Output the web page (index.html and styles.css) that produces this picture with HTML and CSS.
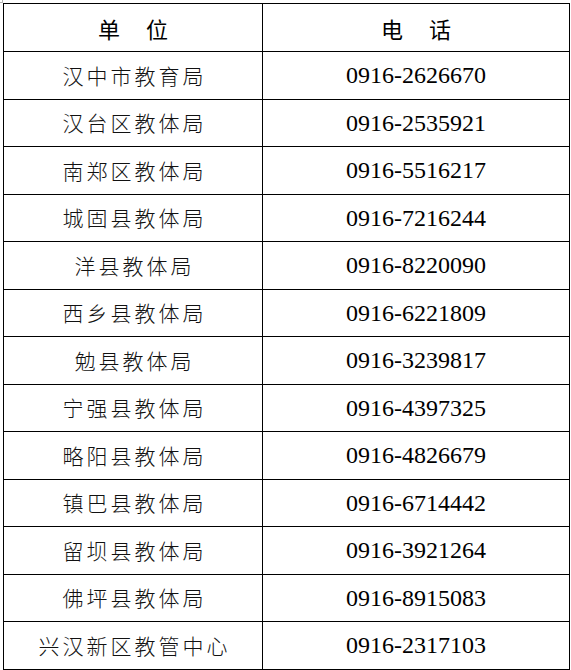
FILE: index.html
```html
<!DOCTYPE html>
<html lang="zh-CN">
<head>
<meta charset="utf-8">
<title>联系电话</title>
<link rel="stylesheet" href="styles.css">
</head>
<body>
<div class="page">
  <span class="corner"></span>
  <table class="contacts">
    <thead>
      <tr class="head-row">
        <th class="col-unit">单　位</th>
        <th class="col-phone">电　话</th>
      </tr>
    </thead>
    <tbody>
      <tr><td class="unit">汉中市教育局</td><td class="phone">0916-2626670</td></tr>
      <tr><td class="unit">汉台区教体局</td><td class="phone">0916-2535921</td></tr>
      <tr><td class="unit">南郑区教体局</td><td class="phone">0916-5516217</td></tr>
      <tr><td class="unit">城固县教体局</td><td class="phone">0916-7216244</td></tr>
      <tr><td class="unit">洋县教体局</td><td class="phone">0916-8220090</td></tr>
      <tr><td class="unit">西乡县教体局</td><td class="phone">0916-6221809</td></tr>
      <tr><td class="unit">勉县教体局</td><td class="phone">0916-3239817</td></tr>
      <tr><td class="unit">宁强县教体局</td><td class="phone">0916-4397325</td></tr>
      <tr><td class="unit">略阳县教体局</td><td class="phone">0916-4826679</td></tr>
      <tr><td class="unit">镇巴县教体局</td><td class="phone">0916-6714442</td></tr>
      <tr><td class="unit">留坝县教体局</td><td class="phone">0916-3921264</td></tr>
      <tr><td class="unit">佛坪县教体局</td><td class="phone">0916-8915083</td></tr>
      <tr><td class="unit">兴汉新区教管中心</td><td class="phone">0916-2317103</td></tr>
    </tbody>
  </table>
</div>
</body>
</html>
```
FILE: styles.css
```css
html, body {
  margin: 0;
  padding: 0;
  background: #ffffff;
}

.page {
  position: relative;
  padding: 3px 0 0 3px;
  width: 571px;
  box-sizing: border-box;
}

.corner {
  position: absolute;
  left: 0;
  top: 0;
  width: 2px;
  height: 2px;
  border-right: 1px solid #b5b5b5;
  border-bottom: 1px solid #b5b5b5;
}

.contacts {
  border-collapse: collapse;
  width: 567px;
  table-layout: fixed;
  color: #000;
}

.contacts th,
.contacts td {
  border: 1px solid #000;
  padding: 0;
  text-align: center;
  vertical-align: middle;
}

.col-unit {
  width: 258px;
}

.head-row {
  height: 48px;
}

.contacts tbody tr {
  height: 47.5px;
}

.contacts th {
  font-family: "Noto Sans CJK SC", "Noto Sans", sans-serif;
  font-weight: 400;
  font-size: 22px;
  letter-spacing: 2px;
  text-indent: 2px;
  line-height: 1;
}

.unit {
  font-family: "Noto Sans CJK SC", "Noto Sans", sans-serif;
  font-weight: 300;
  font-size: 21px;
  letter-spacing: 3px;
  text-indent: 3px;
  line-height: 1;
  color: #111;
}

.phone {
  font-family: "Liberation Serif", "Times New Roman", serif;
  font-size: 24px;
  line-height: 1;
}
```
